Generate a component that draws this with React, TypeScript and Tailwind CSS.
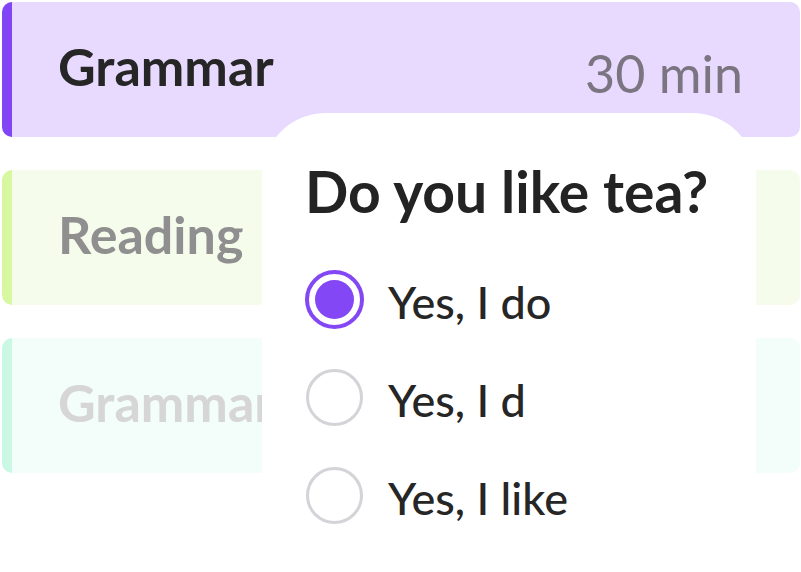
import { useState } from "react";

type Lesson = {
  title: string;
  minutes?: number;
  card: string;
  text: string;
};

const lessons: Lesson[] = [
  { title: "Grammar", minutes: 30, card: "bg-[#e8d9fe] border-[#8145f5]", text: "text-[#262626]" },
  { title: "Reading", card: "bg-[#f5fcec] border-[#d8f7a1]", text: "text-[#8f8f8f]" },
  { title: "Grammar", card: "bg-[#f3fdfa] border-[#cbf7e5]", text: "text-[#d6d6d6]" },
];

const answers = ["Yes, I do", "Yes, I d", "Yes, I like"];

function LessonCard({ lesson }: { lesson: Lesson }) {
  return (
    <div
      className={`h-[135px] rounded-[10px] border-l-[10px] pl-[46px] pr-[57px] flex justify-between items-start ${lesson.card}`}
    >
      <span className={`pt-[33px] text-[52px] leading-[62px] font-bold ${lesson.text}`}>{lesson.title}</span>
      {lesson.minutes != null && (
        <span className="pt-[40px] text-[52px] leading-[62px] text-[#7a7581]">{lesson.minutes} min</span>
      )}
    </div>
  );
}

function Radio({ checked }: { checked: boolean }) {
  return checked ? (
    <span className="size-[59px] shrink-0 rounded-full border-[4px] border-[#8447f5] flex items-center justify-center">
      <span className="size-[39px] rounded-full bg-[#8447f5]" />
    </span>
  ) : (
    <span className="size-[57px] mx-[1px] shrink-0 rounded-full border-[3px] border-[#d4d4d8]" />
  );
}

export default function App() {
  const [selected, setSelected] = useState(0);

  return (
    <div
      className="relative w-[801px] h-[572px] overflow-hidden bg-white"
      style={{ fontFamily: "Lato, 'Noto Sans', sans-serif" }}
    >
      <div className="flex flex-col gap-[33px] pt-[2px] pl-[2px] pr-[1px]">
        {lessons.map((lesson, index) => (
          <LessonCard key={`lesson_${index}`} lesson={lesson} />
        ))}
      </div>

      <div className="absolute left-[262px] top-[113px] w-[494px] h-[470px] bg-white rounded-t-[64px] pl-[43px] pt-[44px]">
        <h2 className="text-[57px] leading-[68px] font-bold text-[#232323]">Do you like tea?</h2>

        <div className="mt-[44px] flex flex-col gap-[38px]">
          {answers.map((answer, index) => (
            <button
              key={`answer_${index}`}
              className="flex items-center gap-[24px] text-left"
              onClick={() => setSelected(index)}
            >
              <Radio checked={selected === index} />
              <span className="pt-[6px] text-[45px] leading-[54px] font-medium text-[#262626]">{answer}</span>
            </button>
          ))}
        </div>
      </div>
    </div>
  );
}
